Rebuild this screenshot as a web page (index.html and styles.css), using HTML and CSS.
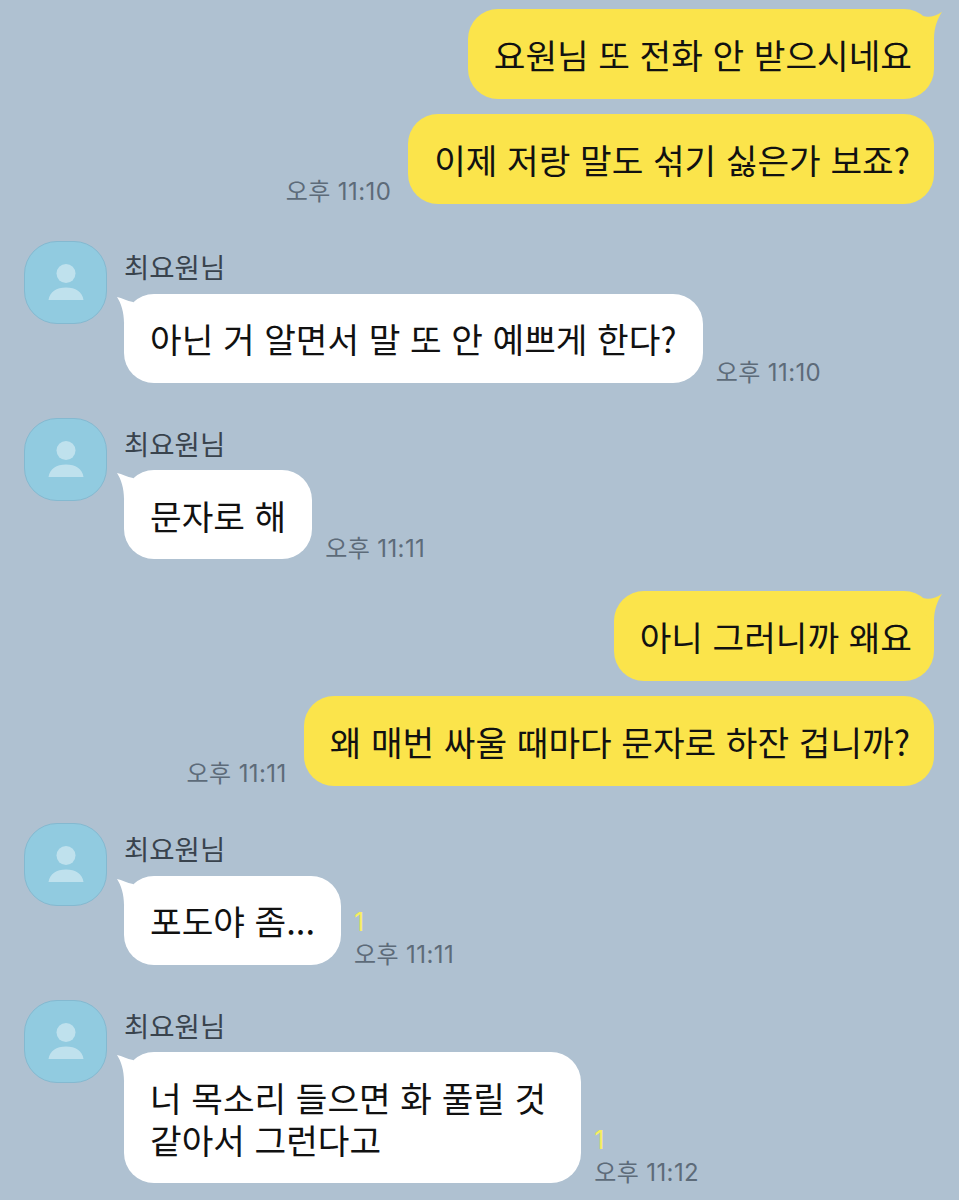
FILE: index.html
```html
<!DOCTYPE html>
<html lang="ko">
<head>
  <meta charset="UTF-8">
  <meta name="viewport" content="width=device-width, initial-scale=1.0">
  <title>채팅</title>
  <link rel="stylesheet" href="styles.css">
</head>
<body>
  <div class="chat">
    <div class="out first">
      <div class="bubble yellow">
        <svg class="tail tail-out" viewBox="0 0 22 32"><path d="M3 7C9 9 16 7 22 2.7C18 9 14 18 14 30L0 20Z"/></svg>
        요원님 또 전화 안 받으시네요
      </div>
    </div>
    <div class="out next">
      <span class="meta"><span class="time">오후 11:10</span></span>
      <div class="bubble yellow ask">이제 저랑 말도 섞기 싫은가 보죠?</div>
    </div>

    <div class="in gap-a">
      <div class="avatar">
        <svg viewBox="0 0 81 81"><circle cx="41" cy="31.500" r="9.500"/><path d="M23.500 58C24.500 50 31.500 45.500 41 45.500C50.500 45.500 57.500 50 58.500 58Z"/></svg>
      </div>
      <div class="body">
        <div class="name">최요원님</div>
        <div class="line">
          <div class="bubble white">
            <svg class="tail tail-in" viewBox="0 0 24 32"><path d="M1 5C6 6 11 9 17 10L24 24L8 31C8 20 5 11 1 5Z"/></svg>
            아닌 거 알면서 말 또 안 예쁘게 한다?
          </div>
          <span class="meta"><span class="time">오후 11:10</span></span>
        </div>
      </div>
    </div>

    <div class="in gap-b">
      <div class="avatar">
        <svg viewBox="0 0 81 81"><circle cx="41" cy="31.500" r="9.500"/><path d="M23.500 58C24.500 50 31.500 45.500 41 45.500C50.500 45.500 57.500 50 58.500 58Z"/></svg>
      </div>
      <div class="body">
        <div class="name">최요원님</div>
        <div class="line">
          <div class="bubble white">
            <svg class="tail tail-in" viewBox="0 0 24 32"><path d="M1 5C6 6 11 9 17 10L24 24L8 31C8 20 5 11 1 5Z"/></svg>
            문자로 해
          </div>
          <span class="meta"><span class="time">오후 11:11</span></span>
        </div>
      </div>
    </div>

    <div class="out gap-c">
      <div class="bubble yellow">
        <svg class="tail tail-out" viewBox="0 0 22 32"><path d="M3 7C9 9 16 7 22 2.7C18 9 14 18 14 30L0 20Z"/></svg>
        아니 그러니까 왜요
      </div>
    </div>
    <div class="out next">
      <span class="meta"><span class="time">오후 11:11</span></span>
      <div class="bubble yellow ask">왜 매번 싸울 때마다 문자로 하잔 겁니까?</div>
    </div>

    <div class="in gap-a">
      <div class="avatar">
        <svg viewBox="0 0 81 81"><circle cx="41" cy="31.500" r="9.500"/><path d="M23.500 58C24.500 50 31.500 45.500 41 45.500C50.500 45.500 57.500 50 58.500 58Z"/></svg>
      </div>
      <div class="body">
        <div class="name">최요원님</div>
        <div class="line">
          <div class="bubble white">
            <svg class="tail tail-in" viewBox="0 0 24 32"><path d="M1 5C6 6 11 9 17 10L24 24L8 31C8 20 5 11 1 5Z"/></svg>
            포도야 좀...
          </div>
          <span class="meta"><span class="unread">1</span><span class="time">오후 11:11</span></span>
        </div>
      </div>
    </div>

    <div class="in gap-b">
      <div class="avatar">
        <svg viewBox="0 0 81 81"><circle cx="41" cy="31.500" r="9.500"/><path d="M23.500 58C24.500 50 31.500 45.500 41 45.500C50.500 45.500 57.500 50 58.500 58Z"/></svg>
      </div>
      <div class="body">
        <div class="name">최요원님</div>
        <div class="line">
          <div class="bubble white wrapped">
            <svg class="tail tail-in" viewBox="0 0 24 32"><path d="M1 5C6 6 11 9 17 10L24 24L8 31C8 20 5 11 1 5Z"/></svg>
            너 목소리 들으면 화 풀릴 것<br>같아서 그런다고
          </div>
          <span class="meta"><span class="unread">1</span><span class="time">오후 11:12</span></span>
        </div>
      </div>
    </div>
  </div>
</body>
</html>
```

FILE: styles.css
```css
html, body {
  margin: 0;
  padding: 0;
  background-color: #afc1d1;
}
body {
  font-family: "Noto Sans CJK KR", "Noto Sans", sans-serif;
  height: 1200px;
  overflow: hidden;
}
.chat {
  padding: 9px 25px 0 24px;
}
.out {
  display: flex;
  justify-content: flex-end;
  align-items: flex-end;
}
.in {
  display: flex;
  gap: 17px;
}
.next { margin-top: 15px; }
.gap-a { margin-top: 37px; }
.gap-b { margin-top: 35px; }
.gap-c { margin-top: 32px; }

.bubble {
  position: relative;
  padding: 24px 26px;
  border-radius: 30px;
  font-size: 34.4px;
  line-height: 42px;
  color: #111;
  white-space: nowrap;
}
.yellow {
  background-color: #fbe44b;
  padding-right: 22px;
}
.ask { padding-right: 24px; }
.white {
  background-color: #fff;
  padding-top: 23.5px;
  padding-bottom: 23.5px;
}
.wrapped { padding-right: 35px; }

.tail {
  position: absolute;
  top: 0;
  width: 22px;
  height: 32px;
}
.yellow .tail { fill: #fbe44b; }
.white .tail { fill: #fff; }
.tail-out {
  right: -8px;
  top: 0;
}
.tail-in {
  left: -8px;
  top: -2px;
  width: 24px;
}

.avatar {
  box-sizing: border-box;
  flex: none;
  width: 83px;
  height: 83px;
  border-radius: 33px;
  background-color: #91cbe0;
  border: 1px solid #84b9d0;
}
.avatar svg {
  display: block;
  width: 81px;
  height: 81px;
  fill: #bfe1ed;
}
.name {
  height: 52.5px;
  font-size: 27.5px;
  line-height: 50px;
  color: #39434d;
}
.line {
  display: flex;
  align-items: flex-end;
}
.meta {
  display: flex;
  flex-direction: column;
  font-family: Inter, "Noto Sans CJK KR", sans-serif;
  font-size: 24px;
  line-height: 30px;
  letter-spacing: 0.4px;
}
.out .meta {
  margin-right: 17px;
  margin-bottom: -3px;
}
.in .meta {
  margin-left: 13px;
  margin-bottom: -5px;
}
.time {
  color: #5d6b79;
  white-space: nowrap;
}
.unread {
  color: #f7ee5c;
  font-size: 25px;
  line-height: 36px;
}
```
